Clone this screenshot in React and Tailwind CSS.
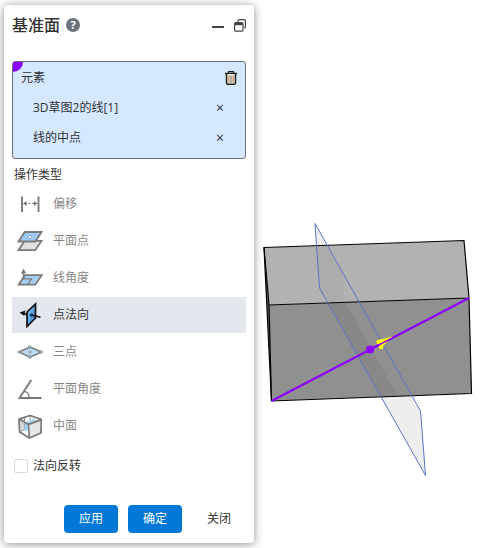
import { useState } from 'react';

const OffsetIcon = () => (
  <svg viewBox="0 0 26 26" className="h-[26px] w-[26px]" fill="none" stroke="#222">
    <path d="M5 5.500v15.500M21.500 5.500v15.500" strokeWidth="1.9" />
    <path d="M8 12.500h11" strokeDasharray="2 1.500" strokeWidth="1.2" />
    <path d="M6 12.500l3.500-2.500v5zM20.500 12.500l-3.500-2.500v5z" fill="#222" stroke="none" />
  </svg>
);

const PlanePointIcon = () => (
  <svg viewBox="0 0 26 26" className="h-[26px] w-[26px]" stroke="#222" strokeWidth="1.8">
    <path d="M7.700 12.800H24.600l-6.300 9.400H1.500z" fill="#ccc" />
    <path d="M7.700 4H24.600l-6.300 9.500H1.500z" fill="#5fa9ef" />
    <circle cx="13" cy="9" r="1.600" fill="#fff" stroke="#24588c" strokeWidth="0.8" />
  </svg>
);

const LineAngleIcon = () => (
  <svg viewBox="0 0 26 26" className="h-[26px] w-[26px]" fill="none" stroke="#222" strokeWidth="1.8">
    <path d="M8 10.200h16.600L18.300 19.700H1.600z" fill="#6cb2f0" />
    <path d="M6.500 14V7" strokeWidth="1.4" />
    <path d="M6.500 3.500L4 8.500h5z" fill="#222" stroke="none" />
    <path d="M6 13.800h8.500L11 19" strokeWidth="1.3" />
  </svg>
);

const PointNormalIcon = () => (
  <svg viewBox="0 0 26 26" className="h-[26px] w-[26px]" fill="none" stroke="#111">
    <defs>
      <linearGradient id="normalFill" x1="0" y1="0" x2="1" y2="1">
        <stop offset="0" stopColor="#9bd2fa" />
        <stop offset="1" stopColor="#1879cc" />
      </linearGradient>
    </defs>
    <path d="M5 11l5 1.500" strokeWidth="1.6" />
    <path d="M2.500 10.500l5.800-2-1 5.500z" fill="#111" stroke="none" />
    <path d="M10 10L18.500 2v14L10 24.500z" fill="url(#normalFill)" strokeWidth="1.7" />
    <circle cx="14.300" cy="13" r="1.800" fill="#174f83" stroke="none" />
    <path d="M14.300 13l9.200 2.200" strokeWidth="1.6" />
  </svg>
);

const ThreePointIcon = () => (
  <svg viewBox="0 0 26 26" className="h-[26px] w-[26px]" stroke="#222">
    <path d="M2 13L13 8l11.500 5L13 18.200z" fill="#8fcaf6" strokeWidth="1.5" />
    <g fill="#8fb9d9" strokeWidth="0.8">
      <circle cx="12.500" cy="8" r="1.300" />
      <circle cx="2.500" cy="13" r="1.300" />
      <circle cx="23.800" cy="13" r="1.300" />
      <circle cx="13" cy="18" r="1.300" />
      <circle cx="13" cy="13" r="1.500" strokeWidth="0.5" />
    </g>
  </svg>
);

const AngleIcon = () => (
  <svg viewBox="0 0 26 26" className="h-[26px] w-[26px]" fill="none" stroke="#222">
    <path d="M14.300 4L2.500 22h22" strokeWidth="1.9" />
    <path d="M7 15.500c3 0 5 2.500 5 6" strokeWidth="1.3" />
  </svg>
);

const MidPlaneIcon = () => (
  <svg viewBox="0 0 26 26" className="h-[26px] w-[26px]" fill="none" stroke="#222" strokeLinejoin="round">
    <path d="M2 6L13 2.500 24.300 6v14L12.300 25 2.600 19z" fill="#fff" strokeWidth="0.8" />
    <path d="M2 6l5.500-1.800v12.300L2.600 19z" fill="#bbb" strokeWidth="0.8" />
    <path d="M13 2.500v5" strokeWidth="0.8" />
    <path d="M7.500 9.500l11-4v9l-11 4z" fill="#6cb8f5" stroke="none" />
    <path d="M2 6L13 2.500 24.300 6.500 11.500 11.500z" strokeWidth="1.6" />
    <path d="M11.500 11.500l12.800-4.500-.5 13L12.300 25z" fill="#d5d5d5" strokeWidth="1.6" />
    <path d="M2 6L2.600 19l9.700 6" strokeWidth="1.6" />
  </svg>
);

const operations = [
  { label: '偏移', Icon: OffsetIcon },
  { label: '平面点', Icon: PlanePointIcon },
  { label: '线角度', Icon: LineAngleIcon },
  { label: '点法向', Icon: PointNormalIcon },
  { label: '三点', Icon: ThreePointIcon },
  { label: '平面角度', Icon: AngleIcon },
  { label: '中面', Icon: MidPlaneIcon },
];

const Scene = () => (
  <svg viewBox="254 0 231 548" className="min-w-0 flex-1" fill="none">
    {/* Solid body */}
    <path d="M264 247.500L464 240.500 469 298 269 305z" fill="#b2b2b2" />
    <path d="M264 247.500L269 305 271.500 401z" fill="#666" />
    <path d="M269 305L469 298 471.500 393.500 271.500 401z" fill="#909090" />

    {/* Reference plane */}
    <path d="M315 223.500L326.500 245 316.500 245.500z" fill="#eee" />
    <path d="M316.500 245.500L326.500 245 343 274 344.500 302 328 303 319.500 288z" fill="#acacac" />
    <path d="M328 303L345 302 398 396.500 381 397.500z" fill="#888" />
    <path d="M381 397.500L411.500 396 420.500 411 425.500 475.500z" fill="#eee" />

    <g stroke="#000" strokeWidth="1.2">
      <path d="M264 247.500L464 240.500 469 298 269 305zM269 305L271.500 401 471.500 393.500 469 298" />
      <path d="M264 247.500L271.500 401" />
    </g>
    <path d="M315 223.500L420.500 411 425.500 475.500 319.500 288z" stroke="#5d74c8" />

    {/* Normal direction and picked line */}
    <path d="M271.500 401L469 298" stroke="#8b00ff" strokeWidth="2" />
    <path d="M378 340L392.500 336.500 381 348z" fill="#ffff00" />
    <circle cx="378.500" cy="342" r="2.200" fill="#ffff00" />
    <circle cx="381" cy="347" r="2.200" fill="#ffff00" />
    <path d="M370 349.500L392 338.200" stroke="#8b00ff" strokeWidth="1.500" />
    <circle cx="370" cy="349.500" r="4" fill="#8b00ff" />
  </svg>
);

const App = () => {
  const [elements, setElements] = useState(['3D草图2的线[1]', '线的中点']);
  const [operation, setOperation] = useState('点法向');
  const [reversed, setReversed] = useState(false);

  return (
    <div className="flex min-h-screen items-stretch bg-white font-['Open_Sans','Noto_Sans_CJK_SC',sans-serif] text-xs text-[#333]">
      <section className="mt-[5px] ml-1 w-[250px] shrink-0 self-start rounded bg-white px-2 pb-[10px] shadow-[0_1px_10px_rgba(0,0,0,0.45)]">
        {/* Header */}
        <header className="flex h-10 items-center">
          <h1 className="text-base font-medium">基准面</h1>
          <button
            type="button"
            aria-label="帮助"
            className="ml-[6px] h-[14px] w-[14px] rounded-full bg-[#6c757d] text-[11px] leading-[14px] font-bold text-white"
          >
            ?
          </button>
          <button type="button" aria-label="最小化" className="ml-auto flex h-4 w-3 items-center">
            <svg viewBox="0 0 12 16" className="h-4 w-3">
              <path d="M0 10h12" stroke="#444" strokeWidth="2" />
            </svg>
          </button>
          <button type="button" aria-label="还原" className="ml-[10px]">
            <svg viewBox="0 0 12 13" className="h-[13px] w-3" fill="none" stroke="#444" strokeWidth="1.2">
              <path d="M4 3V2a1.300 1.300 0 011.300-1.300h5A1.300 1.300 0 0111.400 2v5.500A1.300 1.300 0 0110 9" />
              <rect x="0.6" y="3.600" width="8.400" height="8.600" rx="1.300" />
              <path d="M1 5h7.500" strokeWidth="2.500" />
            </svg>
          </button>
        </header>

        {/* Picked elements */}
        <div className="relative mt-4 overflow-hidden rounded-[3px] border border-[#6c6f7e] bg-[#d4e8ff] pb-[5px]">
          <span className="absolute top-0 left-0 h-[10px] w-[10px] rounded-br-full bg-[#8b00ff]" />
          <div className="flex h-[31px] items-center justify-between px-2">
            <span>元素</span>
            <button type="button" aria-label="清空" onClick={() => setElements([])}>
              <svg viewBox="0 0 12 14" className="h-[14px] w-3" fill="none" stroke="#222">
                <path d="M0 2.500h12" strokeWidth="1.500" />
                <path d="M3.500 2.500V0.700h5v1.800" strokeWidth="1.2" />
                <path d="M1.500 3v9a1.300 1.300 0 001.300 1.300h6.400a1.300 1.300 0 001.300-1.300V3" fill="#e8e4dc" strokeWidth="1.500" />
                <path d="M3.800 4.500v7" stroke="#c98232" />
                <path d="M6 4.500v7" stroke="#777" />
                <path d="M8.200 4.500v7" stroke="#c98232" />
              </svg>
            </button>
          </div>
          <ul>
            {elements.map((name) => (
              <li key={name} className="flex h-[30px] items-center justify-between px-5">
                <span>{name}</span>
                <button
                  type="button"
                  aria-label={`移除 ${name}`}
                  className="w-[10px] text-center text-sm"
                  onClick={() => setElements(elements.filter((item) => item !== name))}
                >
                  ×
                </button>
              </li>
            ))}
          </ul>
        </div>

        {/* Operation type */}
        <h2 className="mt-1 flex h-[23px] items-center pl-[2px]">操作类型</h2>
        <div className="flex flex-col gap-px">
          {operations.map(({ label, Icon }) => {
            const active = label === operation;
            return (
              <button
                key={label}
                type="button"
                aria-pressed={active}
                onClick={() => setOperation(label)}
                className={`flex h-9 items-center gap-[10px] pl-[5px] ${active ? 'bg-[#e4e7ee]' : 'opacity-60'}`}
              >
                <Icon />
                <span>{label}</span>
              </button>
            );
          })}
        </div>

        <label className="mt-2 flex h-7 items-center gap-[5px] pl-[2px]">
          <input
            type="checkbox"
            checked={reversed}
            onChange={(e) => setReversed(e.target.checked)}
            className="h-[14px] w-[14px] appearance-none rounded-xs border border-[#d8d9e0] bg-white checked:bg-[#0078d7]"
          />
          法向反转
        </label>

        {/* Actions */}
        <footer className="mt-[25px] flex justify-end gap-[10px]">
          <button type="button" className="h-7 w-[54px] rounded bg-[#0078d7] text-white">
            应用
          </button>
          <button type="button" className="h-7 w-[54px] rounded bg-[#0078d7] text-white">
            确定
          </button>
          <button type="button" className="h-7 w-[54px] rounded">
            关闭
          </button>
        </footer>
      </section>

      <Scene />
    </div>
  );
};

export default App;
